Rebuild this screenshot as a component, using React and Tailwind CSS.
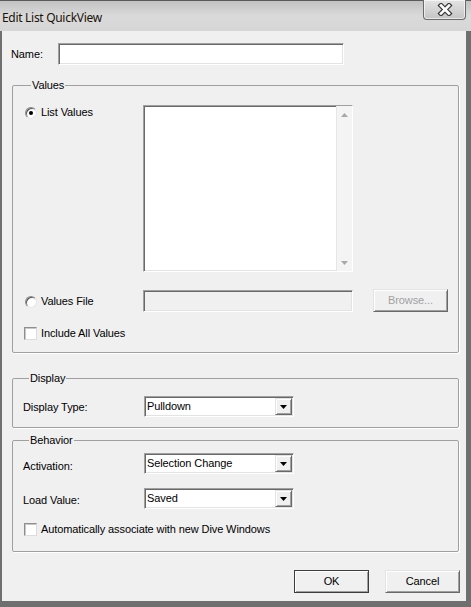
import React from "react";

const sunken =
  "border border-t-[#a0a0a0] border-l-[#a0a0a0] border-b-white border-r-white shadow-[inset_1px_1px_0_#696969,inset_-1px_-1px_0_#e3e3e3]";
const raised =
  "border border-t-[#e3e3e3] border-l-[#e3e3e3] border-b-[#696969] border-r-[#696969] shadow-[inset_1px_1px_0_#ffffff,inset_-1px_-1px_0_#a0a0a0]";

function Radio({ checked, label }) {
  return (
    <div className="flex items-center h-[13px]">
      <div className="w-[12px] h-[12px] rounded-full border border-t-[#8a8a8a] border-l-[#8a8a8a] border-b-[#e6e6e6] border-r-[#e6e6e6] bg-white shadow-[inset_1px_1px_0_#5a5a5a] flex items-center justify-center">
        {checked && <div className="w-[4px] h-[4px] rounded-full bg-black" />}
      </div>
      <span className="ml-[4px]">{label}</span>
    </div>
  );
}

function Check({ label }) {
  return (
    <div className="flex items-center h-[13px] -ml-[1px]">
      <div className="w-[13px] h-[13px] bg-white border border-t-[#8e8e8e] border-l-[#8e8e8e] border-b-[#dcdcdc] border-r-[#dcdcdc] shadow-[inset_1px_1px_0_#c8c8c8]" />
      <span className="ml-[4px]">{label}</span>
    </div>
  );
}

function Select({ value }) {
  return (
    <div className={"w-[150px] h-[21px] bg-white flex items-center pl-[2px] pr-[1px] " + sunken}>
      <span className="flex-1">{value}</span>
      <div className={"w-[17px] h-[17px] bg-[#f0f0f0] flex items-center justify-center " + raised}>
        <svg width="7" height="4" viewBox="0 0 7 4">
          <path d="M0 0 H7 L3.5 4 Z" fill="#000" />
        </svg>
      </div>
    </div>
  );
}

function Group({ title, className, children }) {
  return (
    <fieldset
      className={
        "border border-[#a0a0a0] rounded-[2px] shadow-[1px_1px_0_#ffffff] " + className
      }
    >
      <legend className="ml-[6px] px-[1px] leading-[13px]">{title}</legend>
      {children}
    </fieldset>
  );
}

function Button({ label, def, disabled }) {
  return (
    <div
      className={
        "w-[75px] h-[23px] bg-[#f0f0f0] flex items-center justify-center " +
        (def ? "outline outline-1 outline-[#3c3c3c] -outline-offset-1 " : "") +
        (disabled ? "text-[#a0a0a0] " : "") +
        raised
      }
    >
      {label}
    </div>
  );
}

export default function App() {
  return (
    <div className="w-[471px] h-[607px] flex flex-col bg-[#6f6f6f] text-[11px] leading-[13px] tracking-[-0.1px] text-black font-['Liberation_Sans',Arial,sans-serif] overflow-hidden">
      {/* title bar */}
      <div className="h-[31px] flex items-start justify-between border-t border-[#5a5a5a] bg-linear-to-b from-[#c2c2c2] via-[#dadada] to-[#d6d6d6]">
        <span className="mt-[10px] ml-[2px] text-[12px] leading-[14px] text-[#1a1208] font-['Noto_Sans',sans-serif] tracking-[-0.3px]">
          Edit List QuickView
        </span>
        <div className="mr-[5px] w-[43px] h-[20px] -mt-[1px] rounded-b-[4px] border border-t-0 border-[#6a6a6a] bg-linear-to-b from-[#e4e4e4] to-[#c4c4c4] shadow-[inset_0_0_0_1px_rgba(255,255,255,0.6)] flex items-center justify-center">
          <svg width="18" height="13" viewBox="0 0 18 13">
            <path d="M5 2.5 L13 10.5 M13 2.5 L5 10.5" stroke="#3a3a3a" strokeWidth="5" strokeLinecap="square" />
            <path d="M5 2.5 L13 10.5 M13 2.5 L5 10.5" stroke="#ffffff" strokeWidth="2.6" strokeLinecap="square" />
          </svg>
        </div>
      </div>

      {/* client area */}
      <div className="flex-1 ml-[2px] mr-[5px] mb-[6px] bg-[#f0f0f0] flex flex-col pl-[10px] pr-[7px]">
        <div className="mt-[12px] -ml-[1px] flex items-center h-[22px]">
          <span className="w-[47px]">Name:</span>
          <div className={"w-[286px] h-[22px] bg-white " + sunken} />
        </div>

        <Group title="Values" className="mt-[14px] pl-[12px] pb-[12px]">
          <div className="mt-[13px] flex items-start">
            <div className="w-[118px] mt-[1px]">
              <Radio checked label="List Values" />
            </div>
            <div className={"w-[210px] h-[167px] bg-white flex justify-end " + sunken}>
              <div className="w-[16px] h-full bg-[#f4f4f4] border-l border-[#e6e6e6] flex flex-col items-center justify-between pt-[7px] pb-[6px]">
                <svg width="7" height="4" viewBox="0 0 7 4">
                  <path d="M0 4 H7 L3.5 0 Z" fill="#a8a8a8" />
                </svg>
                <svg width="7" height="4" viewBox="0 0 7 4">
                  <path d="M0 0 H7 L3.5 4 Z" fill="#a8a8a8" />
                </svg>
              </div>
            </div>
          </div>

          <div className="mt-[17px] flex items-center h-[23px]">
            <div className="w-[118px] mt-[2px]">
              <Radio label="Values File" />
            </div>
            <div className={"w-[210px] h-[22px] bg-[#f0f0f0] " + sunken} />
            <div className="ml-[20px]">
              <Button label="Browse..." disabled />
            </div>
          </div>

          <div className="mt-[15px]">
            <Check label="Include All Values" />
          </div>
        </Group>

        <Group title="Display" className="mt-[19px] pl-[10px] pb-[10px]">
          <div className="mt-[11px] flex items-center h-[21px]">
            <span className="w-[121px] mt-[2px]">Display Type:</span>
            <Select value="Pulldown" />
          </div>
        </Group>

        <Group title="Behavior" className="mt-[6px] pl-[10px] pb-[15px]">
          <div className="mt-[6px] flex items-center h-[21px]">
            <span className="w-[121px] mt-[5px]">Activation:</span>
            <Select value="Selection Change" />
          </div>
          <div className="mt-[14px] flex items-center h-[21px]">
            <span className="w-[121px] mt-[4px]">Load Value:</span>
            <Select value="Saved" />
          </div>
          <div className="mt-[14px] pl-[2px]">
            <Check label="Automatically associate with new Dive Windows" />
          </div>
        </Group>

        <div className="mt-[18px] -mr-[1px] flex justify-end gap-[16px]">
          <Button label="OK" def />
          <Button label="Cancel" />
        </div>
      </div>
    </div>
  );
}
